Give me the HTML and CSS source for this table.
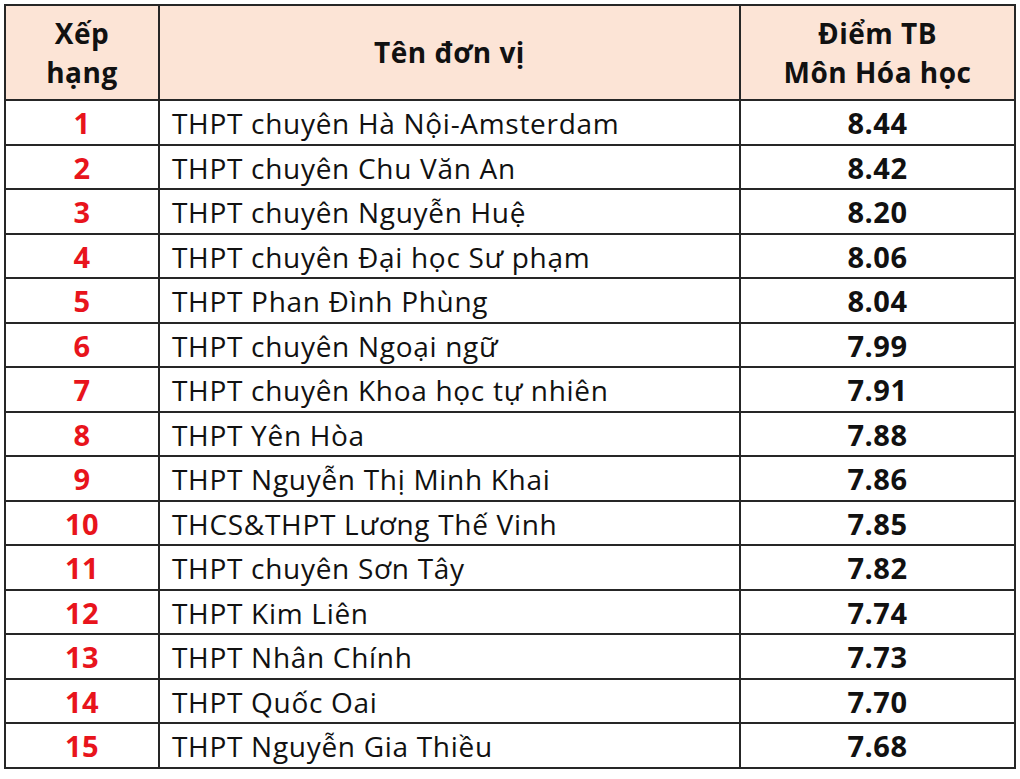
FILE: index.html
```html
<!DOCTYPE html>
<html lang="vi">
<head>
<meta charset="utf-8">
<title>Xếp hạng Điểm TB Môn Hóa học</title>
<link rel="stylesheet" href="styles.css">
</head>
<body>
<table class="rank">
  <colgroup><col class="c-rank"><col class="c-name"><col class="c-score"></colgroup>
  <thead>
    <tr><th>Xếp<br>hạng</th><th>Tên đơn vị</th><th>Điểm TB<br>Môn Hóa học</th></tr>
  </thead>
  <tbody>
    <tr><td class="rk">1</td><td class="nm">THPT chuyên Hà Nội-Amsterdam</td><td class="sc">8.44</td></tr>
    <tr><td class="rk">2</td><td class="nm">THPT chuyên Chu Văn An</td><td class="sc">8.42</td></tr>
    <tr><td class="rk">3</td><td class="nm">THPT chuyên Nguyễn Huệ</td><td class="sc">8.20</td></tr>
    <tr><td class="rk">4</td><td class="nm">THPT chuyên Đại học Sư phạm</td><td class="sc">8.06</td></tr>
    <tr><td class="rk">5</td><td class="nm">THPT Phan Đình Phùng</td><td class="sc">8.04</td></tr>
    <tr><td class="rk">6</td><td class="nm">THPT chuyên Ngoại ngữ</td><td class="sc">7.99</td></tr>
    <tr><td class="rk">7</td><td class="nm">THPT chuyên Khoa học tự nhiên</td><td class="sc">7.91</td></tr>
    <tr><td class="rk">8</td><td class="nm">THPT Yên Hòa</td><td class="sc">7.88</td></tr>
    <tr><td class="rk">9</td><td class="nm">THPT Nguyễn Thị Minh Khai</td><td class="sc">7.86</td></tr>
    <tr><td class="rk">10</td><td class="nm">THCS&amp;THPT Lương Thế Vinh</td><td class="sc">7.85</td></tr>
    <tr><td class="rk">11</td><td class="nm">THPT chuyên Sơn Tây</td><td class="sc">7.82</td></tr>
    <tr><td class="rk">12</td><td class="nm">THPT Kim Liên</td><td class="sc">7.74</td></tr>
    <tr><td class="rk">13</td><td class="nm">THPT Nhân Chính</td><td class="sc">7.73</td></tr>
    <tr><td class="rk">14</td><td class="nm">THPT Quốc Oai</td><td class="sc">7.70</td></tr>
    <tr><td class="rk">15</td><td class="nm">THPT Nguyễn Gia Thiều</td><td class="sc">7.68</td></tr>
  </tbody>
</table>
</body>
</html>
```

FILE: styles.css
```css
html, body {
  margin: 0;
  background: #ffffff;
}
body {
  padding: 4px 0 0 4px;
  font-family: "Open Sans", "Noto Sans", sans-serif;
  color: #111111;
}
.rank {
  border-collapse: collapse;
  table-layout: fixed;
  width: 1010px;
}
.c-rank { width: 154px; }
.c-name { width: 581px; }
.c-score { width: 275px; }
.rank th, .rank td {
  border: 2px solid #262626;
  padding: 0;
}
.rank th {
  background: #fce4d6;
  height: 93px;
  font-weight: 700;
  font-size: 28px;
  letter-spacing: 0.5px;
  line-height: 39px;
  text-align: center;
}
.rank td {
  height: 40.5px;
  font-size: 28px;
  letter-spacing: 0.7px;
  line-height: 30px;
  padding-top: 2px;
}
.rk {
  text-align: center;
  color: #e8141c;
  font-weight: 700;
  font-size: 29px !important;
  letter-spacing: 0.5px !important;
}
.nm {
  padding-left: 12px !important;
}
.sc {
  text-align: center;
  font-weight: 700;
  font-size: 29px !important;
  letter-spacing: 0.5px !important;
}
```
